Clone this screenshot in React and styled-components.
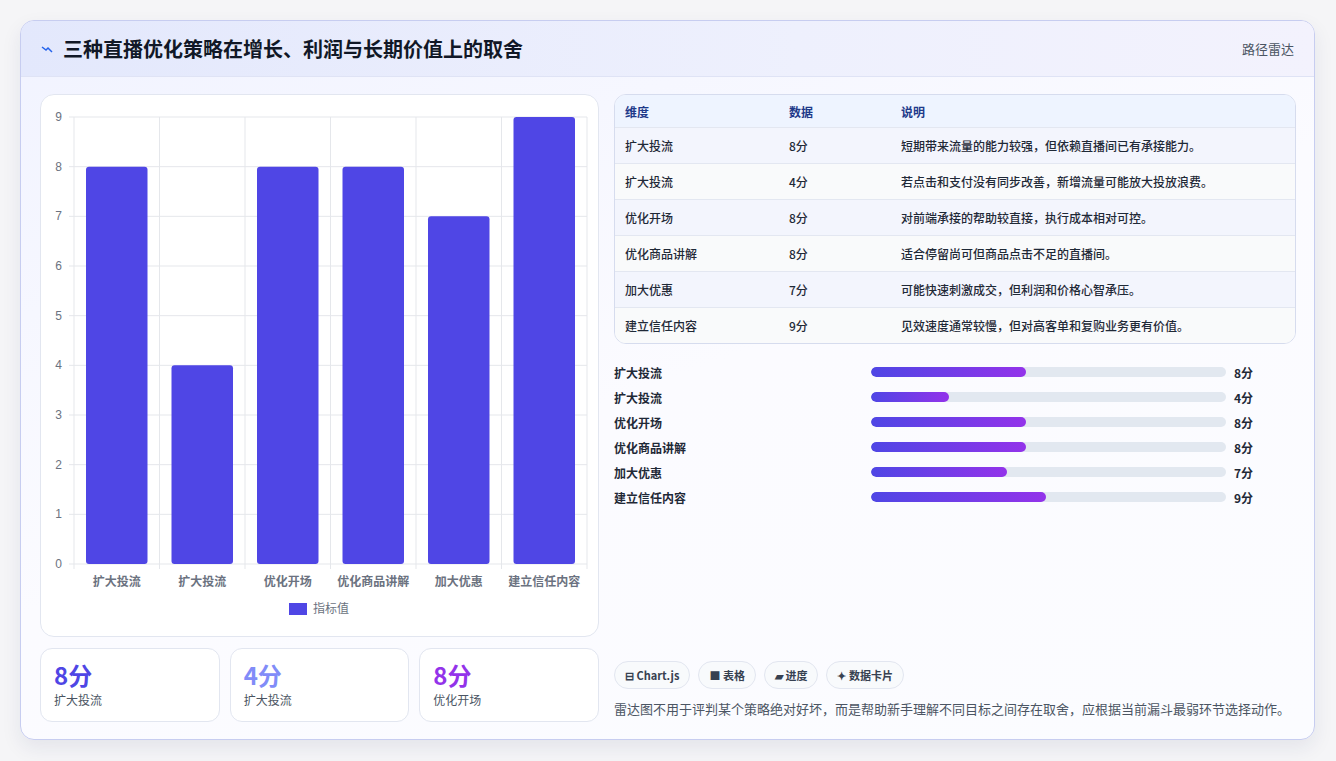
import React from 'react';
import styled, { createGlobalStyle } from 'styled-components';

const Global = createGlobalStyle`
  body { margin: 0; background: #f3f4f6; font-family: "Noto Sans CJK SC", "Noto Sans", sans-serif; }
`;

const Page = styled.div`
  padding: 20px 21px 20px 20px;
  height: 761px;
  box-sizing: border-box;
  background: #f5f5f7;
`;

const Card = styled.div`
  height: 720px;
  box-sizing: border-box;
  border: 1px solid #c7cdf0;
  border-radius: 14px;
  background: linear-gradient(160deg, #f1f3ff 0%, #fbfbff 50%, #fbfcff 100%);
  box-shadow: 0 8px 20px rgba(30, 40, 90, 0.08);
  overflow: hidden;
  display: flex;
  flex-direction: column;
`;

const Header = styled.div`
  height: 55px;
  flex: none;
  display: flex;
  align-items: center;
  justify-content: space-between;
  padding: 0 20px 0 20px;
  background: linear-gradient(90deg, #e3e8fc, #eef0fd 60%, #f3f2fd);
  border-bottom: 1px solid #dfe3f5;
`;

const Title = styled.h1`
  margin: 0;
  font-size: 20px;
  font-weight: 700;
  color: #111827;
  display: flex;
  align-items: center;
  gap: 10px;
`;

const Tag = styled.span`
  font-size: 13px;
  color: #4b5563;
`;

const Body = styled.div`
  flex: 1;
  display: grid;
  grid-template-columns: 559px 1fr;
  gap: 15px;
  padding: 17px 18px 18px 19px;
`;

const Col = styled.div`
  display: flex;
  flex-direction: column;
  gap: 11px;
  min-height: 0;
`;

const ChartCard = styled.div`
  height: 543px;
  background: #fff;
  border: 1px solid #e2e6f0;
  border-radius: 14px;
  box-sizing: border-box;
`;

const Stats = styled.div`
  display: grid;
  grid-template-columns: repeat(3, 1fr);
  gap: 10px;
`;

const Stat = styled.div`
  height: 74px;
  box-sizing: border-box;
  border: 1px solid #e2e6f0;
  border-radius: 12px;
  background: #fff;
  padding: 10px 13px;
`;

const StatValue = styled.div`
  font-size: 24px;
  font-weight: 700;
  line-height: 32px;
  color: ${p => p.$color};
`;

const StatLabel = styled.div`
  font-size: 12px;
  color: #4b5563;
  line-height: 18px;
`;

const Table = styled.div`
  border: 1px solid #d6dcee;
  border-radius: 12px;
  overflow: hidden;
  background: #fff;
`;

const Row = styled.div`
  display: grid;
  grid-template-columns: 164px 112px 1fr;
  height: ${p => (p.$head ? '32px' : '35px')};
  align-items: center;
  padding: 0 10px;
  font-size: 12px;
  font-weight: ${p => (p.$head ? 700 : 500)};
  color: ${p => (p.$head ? '#1e3a8a' : '#1f2937')};
  background: ${p => (p.$head ? '#eef4ff' : p.$alt ? '#f9fafb' : '#f3f5fd')};
  border-top: ${p => (p.$head ? 'none' : '1px solid #e3e7f1')};
`;

const Bars = styled.div`
  display: flex;
  flex-direction: column;
  gap: 7px;
  padding: 8px 0 0;
`;

const BarRow = styled.div`
  display: grid;
  grid-template-columns: 257px 355px 1fr;
  align-items: center;
  gap: 0;
  height: 18px;
  font-size: 12px;
  font-weight: 600;
  color: #1f2937;
`;

const Track = styled.div`
  height: 10px;
  border-radius: 5px;
  background: #e2e8f0;
  overflow: hidden;
`;

const Fill = styled.div`
  height: 100%;
  border-radius: 5px;
  background: linear-gradient(90deg, #4f46e5, #9333ea);
`;

const BarVal = styled.span`
  padding-left: 8px;
`;

const Spacer = styled.div`
  flex: 1;
`;

const Chips = styled.div`
  display: flex;
  gap: 8px;
`;

const Chip = styled.span`
  height: 26px;
  padding: 0 10px;
  display: inline-flex;
  align-items: center;
  gap: 4px;
  border: 1px solid #e2e6f0;
  border-radius: 14px;
  background: #f8fafc;
  font-size: 11px;
  font-weight: 600;
  color: #374151;
`;

const Note = styled.p`
  margin: 10px 0 4px;
  font-size: 13px;
  color: #4b5563;
`;

const data = [
  ['扩大投流', 8, '短期带来流量的能力较强，但依赖直播间已有承接能力。'],
  ['扩大投流', 4, '若点击和支付没有同步改善，新增流量可能放大投放浪费。'],
  ['优化开场', 8, '对前端承接的帮助较直接，执行成本相对可控。'],
  ['优化商品讲解', 8, '适合停留尚可但商品点击不足的直播间。'],
  ['加大优惠', 7, '可能快速刺激成交，但利润和价格心智承压。'],
  ['建立信任内容', 9, '见效速度通常较慢，但对高客单和复购业务更有价值。'],
];

function Chart() {
  const x0 = 33, x1 = 546, y0 = 22, y1 = 469;
  const step = (y1 - y0) / 9;
  const cw = (x1 - x0) / 6;
  return (
    <svg width="557" height="541" style={{ display: 'block' }}>
      {Array.from({ length: 10 }, (_, i) => (
        <g key={i}>
          <line x1={x0 - 5} x2={x1} y1={y1 - i * step} y2={y1 - i * step} stroke="#e5e7eb" />
          <text x={x0 - 12} y={y1 - i * step + 4} fontSize="12" fill="#6b7280" textAnchor="end" fontFamily="Liberation Sans, sans-serif">{i}</text>
        </g>
      ))}
      {Array.from({ length: 7 }, (_, i) => (
        <line key={i} x1={x0 + i * cw} x2={x0 + i * cw} y1={y0} y2={y1 + 5} stroke="#e5e7eb" />
      ))}
      {data.map(([n, v], i) => (
        <g key={i}>
          <rect x={x0 + i * cw + 12} y={y1 - v * step} width={cw - 24} height={v * step} rx="3" fill="#4f46e5" />
          <text x={x0 + i * cw + cw / 2} y={y1 + 22} fontSize="12" fontWeight="600" fill="#6b7280" textAnchor="middle">{n}</text>
        </g>
      ))}
      <rect x="248" y="508" width="18" height="12" fill="#4f46e5" />
      <text x="272" y="518" fontSize="12" fill="#6b7280">指标值</text>
    </svg>
  );
}

export default function App() {
  return (
    <>
      <Global />
      <Page>
        <Card>
          <Header>
            <Title>
              <svg width="12" height="10" viewBox="0 0 12 10"><path d="M1 3 L5 6 L7 4 L11 8" stroke="#2563eb" strokeWidth="1.5" fill="none" /></svg>
              三种直播优化策略在增长、利润与长期价值上的取舍
            </Title>
            <Tag>路径雷达</Tag>
          </Header>
          <Body>
            <Col>
              <ChartCard><Chart /></ChartCard>
              <Stats>
                <Stat><StatValue $color="#4f46e5">8分</StatValue><StatLabel>扩大投流</StatLabel></Stat>
                <Stat><StatValue $color="#818cf8">4分</StatValue><StatLabel>扩大投流</StatLabel></Stat>
                <Stat><StatValue $color="#9333ea">8分</StatValue><StatLabel>优化开场</StatLabel></Stat>
              </Stats>
            </Col>
            <Col>
              <Table>
                <Row $head><span>维度</span><span>数据</span><span>说明</span></Row>
                {data.map(([n, v, d], i) => (
                  <Row key={i} $alt={i % 2 === 1}><span>{n}</span><span>{v}分</span><span>{d}</span></Row>
                ))}
              </Table>
              <Bars>
                {data.map(([n, v], i) => (
                  <BarRow key={i}>
                    <span>{n}</span>
                    <Track><Fill style={{ width: `${(v / 18.3) * 100}%` }} /></Track>
                    <BarVal>{v}分</BarVal>
                  </BarRow>
                ))}
              </Bars>
              <Spacer />
              <div>
                <Chips>
                  <Chip>⊟ Chart.js</Chip>
                  <Chip>■ 表格</Chip>
                  <Chip>▰ 进度</Chip>
                  <Chip>✦ 数据卡片</Chip>
                </Chips>
                <Note>雷达图不用于评判某个策略绝对好坏，而是帮助新手理解不同目标之间存在取舍，应根据当前漏斗最弱环节选择动作。</Note>
              </div>
            </Col>
          </Body>
        </Card>
      </Page>
    </>
  );
}
